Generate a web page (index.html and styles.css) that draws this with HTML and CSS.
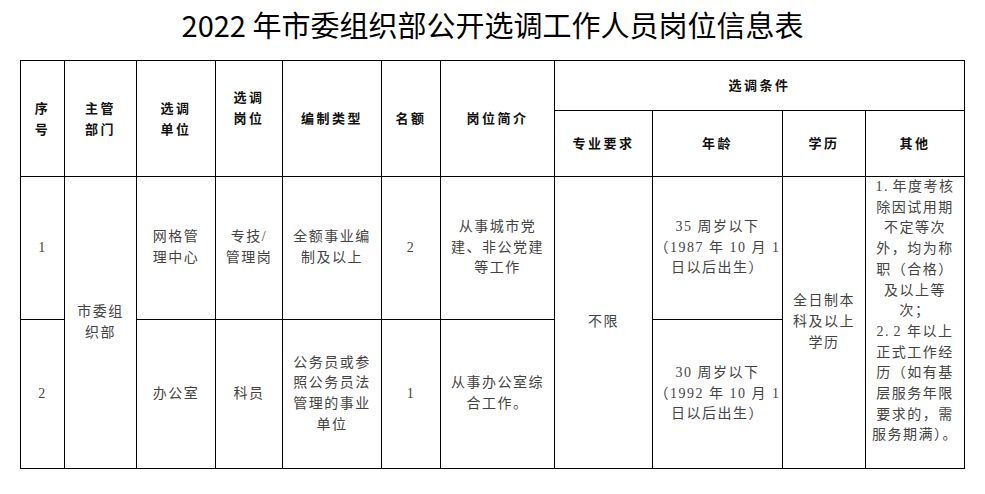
FILE: index.html
```html
<!DOCTYPE html>
<html lang="zh">
<head>
<meta charset="utf-8">
<link rel="stylesheet" href="styles.css">
</head>
<body>
<div class="title">2022 年市委组织部公开选调工作人员岗位信息表</div>
<table class="grid">
  <colgroup>
    <col class="c1"><col class="c2"><col class="c3"><col class="c4"><col class="c5"><col class="c6"><col class="c7"><col class="c8"><col class="c9"><col class="c10"><col class="c11">
  </colgroup>
  <tr class="h1">
    <th rowspan="2">序<br>号</th>
    <th rowspan="2">主管<br>部门</th>
    <th rowspan="2">选调<br>单位</th>
    <th rowspan="2" class="shift">选调<br>岗位</th>
    <th rowspan="2">编制类型</th>
    <th rowspan="2">名额</th>
    <th rowspan="2">岗位简介</th>
    <th colspan="4">选调条件</th>
  </tr>
  <tr class="h2">
    <th>专业要求</th>
    <th>年龄</th>
    <th>学历</th>
    <th>其他</th>
  </tr>
  <tr class="r1">
    <td>1</td>
    <td rowspan="2">市委组<br>织部</td>
    <td>网格管<br>理中心</td>
    <td>专技/<br>管理岗</td>
    <td>全额事业编<br>制及以上</td>
    <td>2</td>
    <td>从事城市党<br>建、非公党建<br>等工作</td>
    <td rowspan="2">不限</td>
    <td>35 周岁以下<br>（1987 年 10 月 1<br>日以后出生）</td>
    <td rowspan="2">全日制本<br>科及以上<br>学历</td>
    <td rowspan="2" class="other">1<span class="dot">.</span>年度考核<br>除因试用期<br>不定等次<br>外，均为称<br>职（合格）<br>及以上等<br>次；<br>2<span class="dot">.</span>2 年以上<br>正式工作经<br>历（如有基<br>层服务年限<br>要求的，需<br>服务期满）。</td>
  </tr>
  <tr class="r2">
    <td>2</td>
    <td>办公室</td>
    <td>科员</td>
    <td>公务员或参<br>照公务员法<br>管理的事业<br>单位</td>
    <td>1</td>
    <td>从事办公室综<br>合工作。</td>
    <td>30 周岁以下<br>（1992 年 10 月 1<br>日以后出生）</td>
  </tr>
</table>
</body>
</html>
```
FILE: styles.css
```css
html, body {
  margin: 0;
  padding: 0;
  background: #fff;
}
.title {
  height: 48px;
  margin-bottom: 12px;
  text-align: center;
  font-family: "Noto Sans CJK SC", "Noto Sans", sans-serif;
  font-size: 29px;
  line-height: 48px;
  color: #000;
}
.grid {
  margin-left: 20px;
  width: 945px;
  table-layout: fixed;
  border-collapse: collapse;
}
.grid th, .grid td {
  border: 1px solid #000;
  padding: 0;
  text-align: center;
  vertical-align: middle;
  line-height: 20.7px;
}
.grid th {
  font-family: "Noto Sans CJK SC", serif;
  font-weight: 700;
  font-size: 13px;
  letter-spacing: 2.5px;
  color: #111;
}
.grid td {
  font-family: "Liberation Serif", "Noto Sans CJK SC", serif;
  font-weight: 400;
  font-size: 14px;
  letter-spacing: 1.5px;
  color: #444;
}
.grid th.shift {
  padding-bottom: 21px;
}
.grid td.other {
  vertical-align: top;
}
.dot {
  letter-spacing: 5px;
}
.c1 { width: 44px; }
.c2 { width: 72px; }
.c3 { width: 79px; }
.c4 { width: 67px; }
.c5 { width: 99px; }
.c6 { width: 59px; }
.c7 { width: 114px; }
.c8 { width: 98px; }
.c9 { width: 130px; }
.c10 { width: 83px; }
.c11 { width: 99px; }
.h1 { height: 50px; }
.h2 { height: 66px; }
.r1 { height: 143px; }
.r2 { height: 149px; }
```
